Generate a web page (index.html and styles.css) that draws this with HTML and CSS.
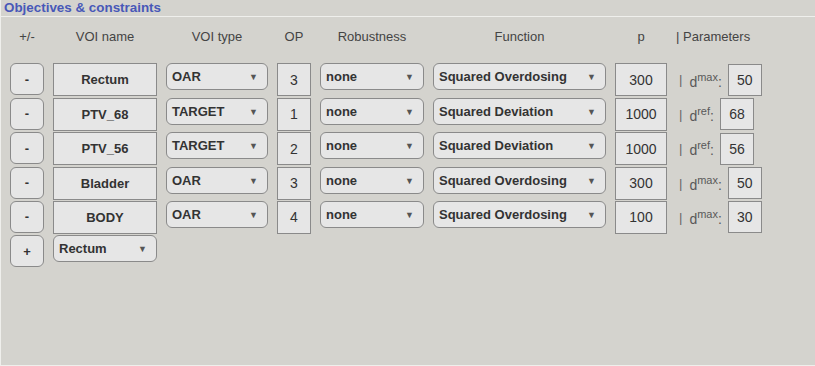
FILE: index.html
```html
<!DOCTYPE html>
<html lang="en">
<head>
    <meta charset="UTF-8">
    <meta name="viewport" content="width=device-width, initial-scale=1.0">
    <title>Objectives &amp; constraints</title>
    <link rel="stylesheet" href="styles.css">
</head>
<body>
    <div class="panel">
        <!-- Panel title -->
        <div class="panel-title">Objectives &amp; constraints</div>

        <div class="grid">
            <!-- Column headers -->
            <div class="head">+/-</div>
            <div class="head">VOI name</div>
            <div class="head">VOI type</div>
            <div class="head">OP</div>
            <div class="head">Robustness</div>
            <div class="head">Function</div>
            <div class="head">p</div>
            <div class="head head-left">| Parameters</div>

            <!-- Row: Rectum -->
            <button class="btn">-</button>
            <div class="box name">Rectum</div>
            <div class="select">OAR<span class="arrow">&#9660;</span></div>
            <div class="box">3</div>
            <div class="select">none<span class="arrow">&#9660;</span></div>
            <div class="select">Squared Overdosing<span class="arrow">&#9660;</span></div>
            <div class="box">300</div>
            <div class="params"><span class="bar">|</span><span class="plabel">d<sup>max</sup>:</span><div class="box pbox">50</div></div>

            <!-- Row: PTV_68 -->
            <button class="btn">-</button>
            <div class="box name">PTV_68</div>
            <div class="select">TARGET<span class="arrow">&#9660;</span></div>
            <div class="box">1</div>
            <div class="select">none<span class="arrow">&#9660;</span></div>
            <div class="select">Squared Deviation<span class="arrow">&#9660;</span></div>
            <div class="box">1000</div>
            <div class="params"><span class="bar">|</span><span class="plabel">d<sup>ref</sup>:</span><div class="box pbox">68</div></div>

            <!-- Row: PTV_56 -->
            <button class="btn">-</button>
            <div class="box name">PTV_56</div>
            <div class="select">TARGET<span class="arrow">&#9660;</span></div>
            <div class="box">2</div>
            <div class="select">none<span class="arrow">&#9660;</span></div>
            <div class="select">Squared Deviation<span class="arrow">&#9660;</span></div>
            <div class="box">1000</div>
            <div class="params"><span class="bar">|</span><span class="plabel">d<sup>ref</sup>:</span><div class="box pbox">56</div></div>

            <!-- Row: Bladder -->
            <button class="btn">-</button>
            <div class="box name">Bladder</div>
            <div class="select">OAR<span class="arrow">&#9660;</span></div>
            <div class="box">3</div>
            <div class="select">none<span class="arrow">&#9660;</span></div>
            <div class="select">Squared Overdosing<span class="arrow">&#9660;</span></div>
            <div class="box">300</div>
            <div class="params"><span class="bar">|</span><span class="plabel">d<sup>max</sup>:</span><div class="box pbox">50</div></div>

            <!-- Row: BODY -->
            <button class="btn">-</button>
            <div class="box name">BODY</div>
            <div class="select">OAR<span class="arrow">&#9660;</span></div>
            <div class="box">4</div>
            <div class="select">none<span class="arrow">&#9660;</span></div>
            <div class="select">Squared Overdosing<span class="arrow">&#9660;</span></div>
            <div class="box">100</div>
            <div class="params"><span class="bar">|</span><span class="plabel">d<sup>max</sup>:</span><div class="box pbox">30</div></div>

            <!-- Add row -->
            <button class="btn">+</button>
            <div class="select">Rectum<span class="arrow">&#9660;</span></div>
        </div>
    </div>
</body>
</html>
```

FILE: styles.css
```css
* {
  margin: 0;
  padding: 0;
  box-sizing: border-box;
}

body {
  font-family: "Liberation Sans", Arial, sans-serif;
  font-size: 13px;
  color: #333;
  background-color: #d4d3ce;
  width: 815px;
  height: 366px;
  overflow: hidden;
}

/* Etched panel */
.panel {
  height: 366px;
  border-left: 1px solid #efefec;
  border-bottom: 1px solid #efefec;
}

.panel-title {
  height: 17px;
  padding-left: 3px;
  line-height: 16px;
  font-weight: bold;
  font-size: 13.4px;
  color: #4858b8;
  border-bottom: 1px solid #efefec;
}

/* Table of objectives */
.grid {
  display: grid;
  grid-template-columns: 34px 104px 102px 34px 104px 173px 52px 1fr;
  grid-auto-rows: 33px;
  column-gap: 9px;
  row-gap: 1.4px;
  padding: 12px 0 0 9px;
}

.head {
  text-align: center;
  color: #444;
  line-height: 18px;
  margin-top: -1px;
  margin-bottom: -17px;
  height: 18px;
}

.head-left {
  text-align: left;
}

.btn {
  font-family: inherit;
  font-size: 13px;
  font-weight: bold;
  color: #333;
  background-color: #e6e6e6;
  border: 1px solid #8a8a8a;
  border-radius: 6px;
  height: 32px;
}

.box {
  background-color: #e6e6e6;
  border: 1px solid #8a8a8a;
  display: flex;
  align-items: center;
  justify-content: center;
  font-size: 14px;
}

.name {
  font-weight: bold;
  font-size: 13px;
}

.select {
  position: relative;
  height: 27px;
  background-color: #e6e6e6;
  border: 1px solid #8a8a8a;
  border-radius: 6px;
  padding-left: 5px;
  line-height: 26px;
  font-weight: bold;
  font-size: 13px;
}

.arrow {
  position: absolute;
  right: 9px;
  top: 0;
  font-size: 9px;
  color: #555;
}

.params {
  display: flex;
  align-items: center;
  padding-left: 3px;
}

.bar {
  color: #666;
  font-size: 13px;
  margin-right: 7px;
}

.plabel {
  color: #595959;
  font-size: 14px;
  margin-right: 6px;
}

.plabel sup {
  font-size: 11px;
}

.pbox {
  width: 34px;
  height: 32px;
}
```
